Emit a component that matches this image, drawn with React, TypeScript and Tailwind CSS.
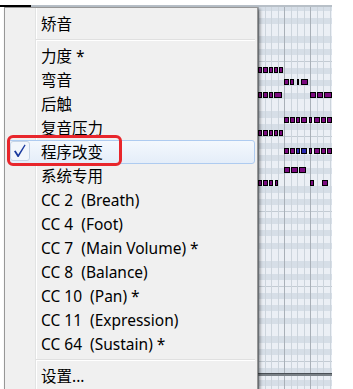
import React from "react";

type Item = { label: string; checked?: boolean } | { sep: true };

const items: Item[] = [
  { label: "矫音" },
  { sep: true },
  { label: "力度 *" },
  { label: "弯音" },
  { label: "后触" },
  { label: "复音压力" },
  { label: "程序改变", checked: true },
  { label: "系统专用" },
  { label: "CC 2\u00a0\u00a0(Breath)" },
  { label: "CC 4\u00a0\u00a0(Foot)" },
  { label: "CC 7\u00a0\u00a0(Main Volume) *" },
  { label: "CC 8\u00a0\u00a0(Balance)" },
  { label: "CC 10\u00a0\u00a0(Pan) *" },
  { label: "CC 11\u00a0\u00a0(Expression)" },
  { label: "CC 64\u00a0\u00a0(Sustain) *" },
  { sep: true },
  { label: "设置..." },
];

const notes: { y: number; segs: [number, number][]; blue?: number[] }[] = [
  { y: 67, segs: [[258, 262], [263, 268], [269, 273], [274, 278], [279, 283]] },
  { y: 79, segs: [[284, 289], [290, 294], [297, 299], [301, 308]] },
  { y: 92, segs: [[258, 262], [263, 268], [269, 273], [274, 282], [310, 316], [317, 323], [324, 332]] },
  { y: 117, segs: [[284, 289], [290, 295], [296, 300], [301, 307], [309, 312], [314, 320], [321, 326], [327, 332]] },
  { y: 130, segs: [[258, 262], [263, 268], [269, 273], [274, 278], [279, 283]] },
  { y: 148, segs: [[284, 289], [290, 295], [296, 300], [301, 307], [309, 312], [314, 320], [321, 326], [327, 332]], blue: [2, 3] },
  { y: 167, segs: [[284, 290], [291, 298], [299, 306]] },
  { y: 180, segs: [[258, 262], [263, 268], [269, 273], [275, 278], [310, 314], [322, 328]] },
];

function PianoRoll() {
  const rows: React.ReactNode[] = [];
  const blackSet = [1, 3, 5, 8, 10];
  for (let r = 0; r < 64; r++) {
    const y0 = Math.round(5 + r * 6.25);
    const y1 = Math.round(5 + (r + 1) * 6.25);
    const idx = ((r + 3) % 12 + 12) % 12;
    const dark = blackSet.includes(idx);
    rows.push(
      <rect key={"r" + r} x={31} y={y0} width={301} height={y1 - y0} fill={dark ? "#d6dee7" : "#ebeff5"} />
    );
    if (idx === 0) {
      rows.push(<rect key={"o" + r} x={31} y={y0} width={301} height={1} fill="#c3cbd3" />);
    }
  }
  const vlines: React.ReactNode[] = [];
  for (let k = -40; k < 8; k++) {
    const x = Math.round(284 + k * 6.5);
    if (x < 31 || x > 331) continue;
    const major = ((k % 4) + 4) % 4 === 0;
    vlines.push(
      <rect key={"v" + k} x={x} y={5} width={1} height={384} fill={major ? "#a9b0b8" : "#ccd4dc"} />
    );
  }
  return (
    <svg className="absolute left-0 top-0" width={353} height={389} viewBox="0 0 353 389">
      {rows}
      {vlines}
      <rect x={0} y={5} width={31} height={2} fill="#000" />
      <rect x={31} y={5} width={301} height={2} fill="#b8c0c8" />
      <rect x={258} y={373} width={74} height={1} fill="#4a5056" />
      <rect x={258} y={374} width={74} height={2} fill="#7a8187" />
      {notes.map((n, i) =>
        n.segs.map(([a, b], j) => (
          <rect
            key={`n${i}-${j}`}
            x={a + 0.5}
            y={n.y + 0.5}
            width={b - a - 1}
            height={5}
            fill={n.blue && n.blue.includes(j) ? "#2a2ab0" : "#7a0a7e"}
            stroke="#000"
            strokeWidth={1}
          />
        ))
      )}
    </svg>
  );
}

export default function App() {
  return (
    <div
      className="relative h-[389px] w-[353px] overflow-hidden bg-white text-black"
      style={{ fontFamily: "'Noto Sans', 'Noto Sans CJK SC', sans-serif" }}
    >
      <PianoRoll />
      <div className="absolute left-[4px] top-[7px] w-[254px] border border-[#979797] bg-[#f0f0f0] pb-[3px] pt-[4px] shadow-[2px_2px_3px_rgba(0,0,0,0.45)]">
        <div className="absolute bottom-0 left-[30px] top-0 w-[1px] bg-[#e2e3e3]" />
        <div className="absolute bottom-0 left-[31px] top-0 w-[1px] bg-white" />
        <div className="relative flex flex-col">
          {items.map((it, i) =>
            "sep" in it ? (
              <div key={i} className="flex h-[8px] items-center pl-[31px] pr-[2px]">
                <div className="flex w-full flex-col">
                  <div className="h-[1px] bg-[#e0e0e0]" />
                  <div className="h-[1px] bg-white" />
                </div>
              </div>
            ) : (
              <div
                key={i}
                className={
                  it.checked
                    ? "relative ml-[3px] mr-[2px] flex h-[24px] items-center rounded-[3px] border border-[#aecbf0] bg-gradient-to-b from-[#f4f8fd] to-[#e4edf9] pl-[32px] pt-[1px] text-[15.5px] leading-none"
                    : "relative ml-[3px] mr-[2px] flex h-[24px] items-center pl-[33px] pt-[1px] text-[15.5px] leading-none"
                }
              >
                {it.checked && (
                  <div className="absolute left-[1px] top-[0px] flex h-[20px] w-[20px] items-center justify-center rounded-[3px] border border-[#c6d4e6] bg-[#f2f6fb]">
                    <svg width="16" height="16" viewBox="0 0 16 16">
                      <path d="M2 8.2 L3.6 7.6 L6.2 11.4 L12.6 1.6 L13.6 2.2 L6.6 14 L5.6 14 Z" fill="#1a3a9e" />
                    </svg>
                  </div>
                )}
                <span className="whitespace-nowrap">{it.label}</span>
              </div>
            )
          )}
        </div>
      </div>
      <div className="absolute left-[7px] top-[135px] h-[31px] w-[115px] rounded-[6px] border-[3px] border-[#e8262c]" />
    </div>
  );
}
